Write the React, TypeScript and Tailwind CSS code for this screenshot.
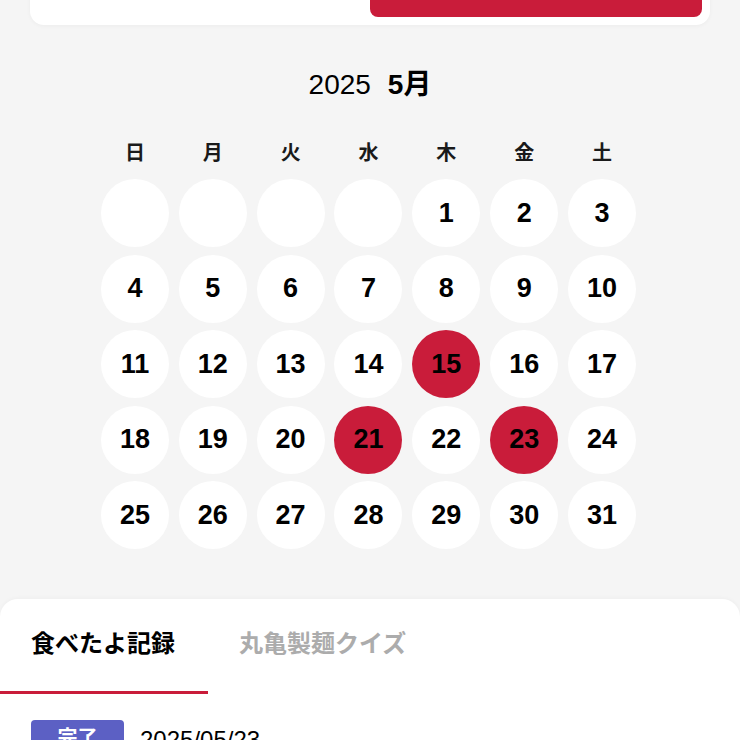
import React from "react";

const font = { fontFamily: '"Liberation Sans", "Noto Sans CJK JP", sans-serif' };

const days: (number | null)[] = [
  null, null, null, null, 1, 2, 3,
  4, 5, 6, 7, 8, 9, 10,
  11, 12, 13, 14, 15, 16, 17,
  18, 19, 20, 21, 22, 23, 24,
  25, 26, 27, 28, 29, 30, 31,
];
const marked = new Set([15, 21, 23]);
const week = ["日", "月", "火", "水", "木", "金", "土"];

export default function App() {
  return (
    <div className="w-[740px] h-[740px] overflow-hidden bg-[#f5f5f5] text-black" style={font}>
      <div className="mx-[30px] mt-[-40px] bg-white rounded-[14px] p-[8px] flex shadow-[0_1px_4px_rgba(0,0,0,0.04)]">
        <div className="flex-1 h-[49px] bg-white rounded-[8px]" />
        <div className="flex-1 h-[49px] bg-[#c91c3a] rounded-[8px]" />
      </div>

      <div className="flex justify-center items-baseline gap-[17px] mt-[46px] h-[32px]">
        <span className="text-[28px] leading-none">2025</span>
        <span className="text-[28px] leading-none font-bold">5月</span>
      </div>

      <div className="w-[545px] ml-[96px] mt-[40px]">
        <div className="grid grid-cols-7">
          {week.map((w) => (
            <div key={w} className="flex justify-center text-[20px] font-bold text-[#1a1a1a] leading-none">
              {w}
            </div>
          ))}
        </div>
        <div className="grid grid-cols-7 gap-y-[7.5px] mt-[16px]">
          {days.map((d, i) => (
            <div key={i} className="flex justify-center">
              <div
                className={`w-[68px] h-[68px] rounded-full flex items-center justify-center text-[27px] font-bold ${
                  d !== null && marked.has(d) ? "bg-[#c91c3a]" : "bg-white"
                }`}
              >
                {d ?? ""}
              </div>
            </div>
          ))}
        </div>
      </div>

      <div className="mt-[50px] bg-white rounded-t-[18px] h-[200px] shadow-[0_-1px_4px_rgba(0,0,0,0.03)]">
        <div className="flex h-[95px]">
          <div className="w-[208px] flex items-center pl-[31px] border-b-[3px] border-[#c91c3a] pb-[2px]">
            <span className="text-[24px] font-bold leading-none whitespace-nowrap">食べたよ記録</span>
          </div>
          <div className="flex items-center pl-[31px] pb-[5px]">
            <span className="text-[24px] font-bold leading-none text-[#acacac] whitespace-nowrap">丸亀製麺クイズ</span>
          </div>
        </div>
        <div className="flex items-start gap-[16px] pl-[31px] pt-[26px]">
          <div className="w-[93px] h-[36px] bg-[#5c60c4] rounded-[4px] flex items-center justify-center text-white text-[20px] font-bold">
            完了
          </div>
          <span className="text-[24px] leading-none mt-[8px]">2025/05/23</span>
        </div>
      </div>
    </div>
  );
}
